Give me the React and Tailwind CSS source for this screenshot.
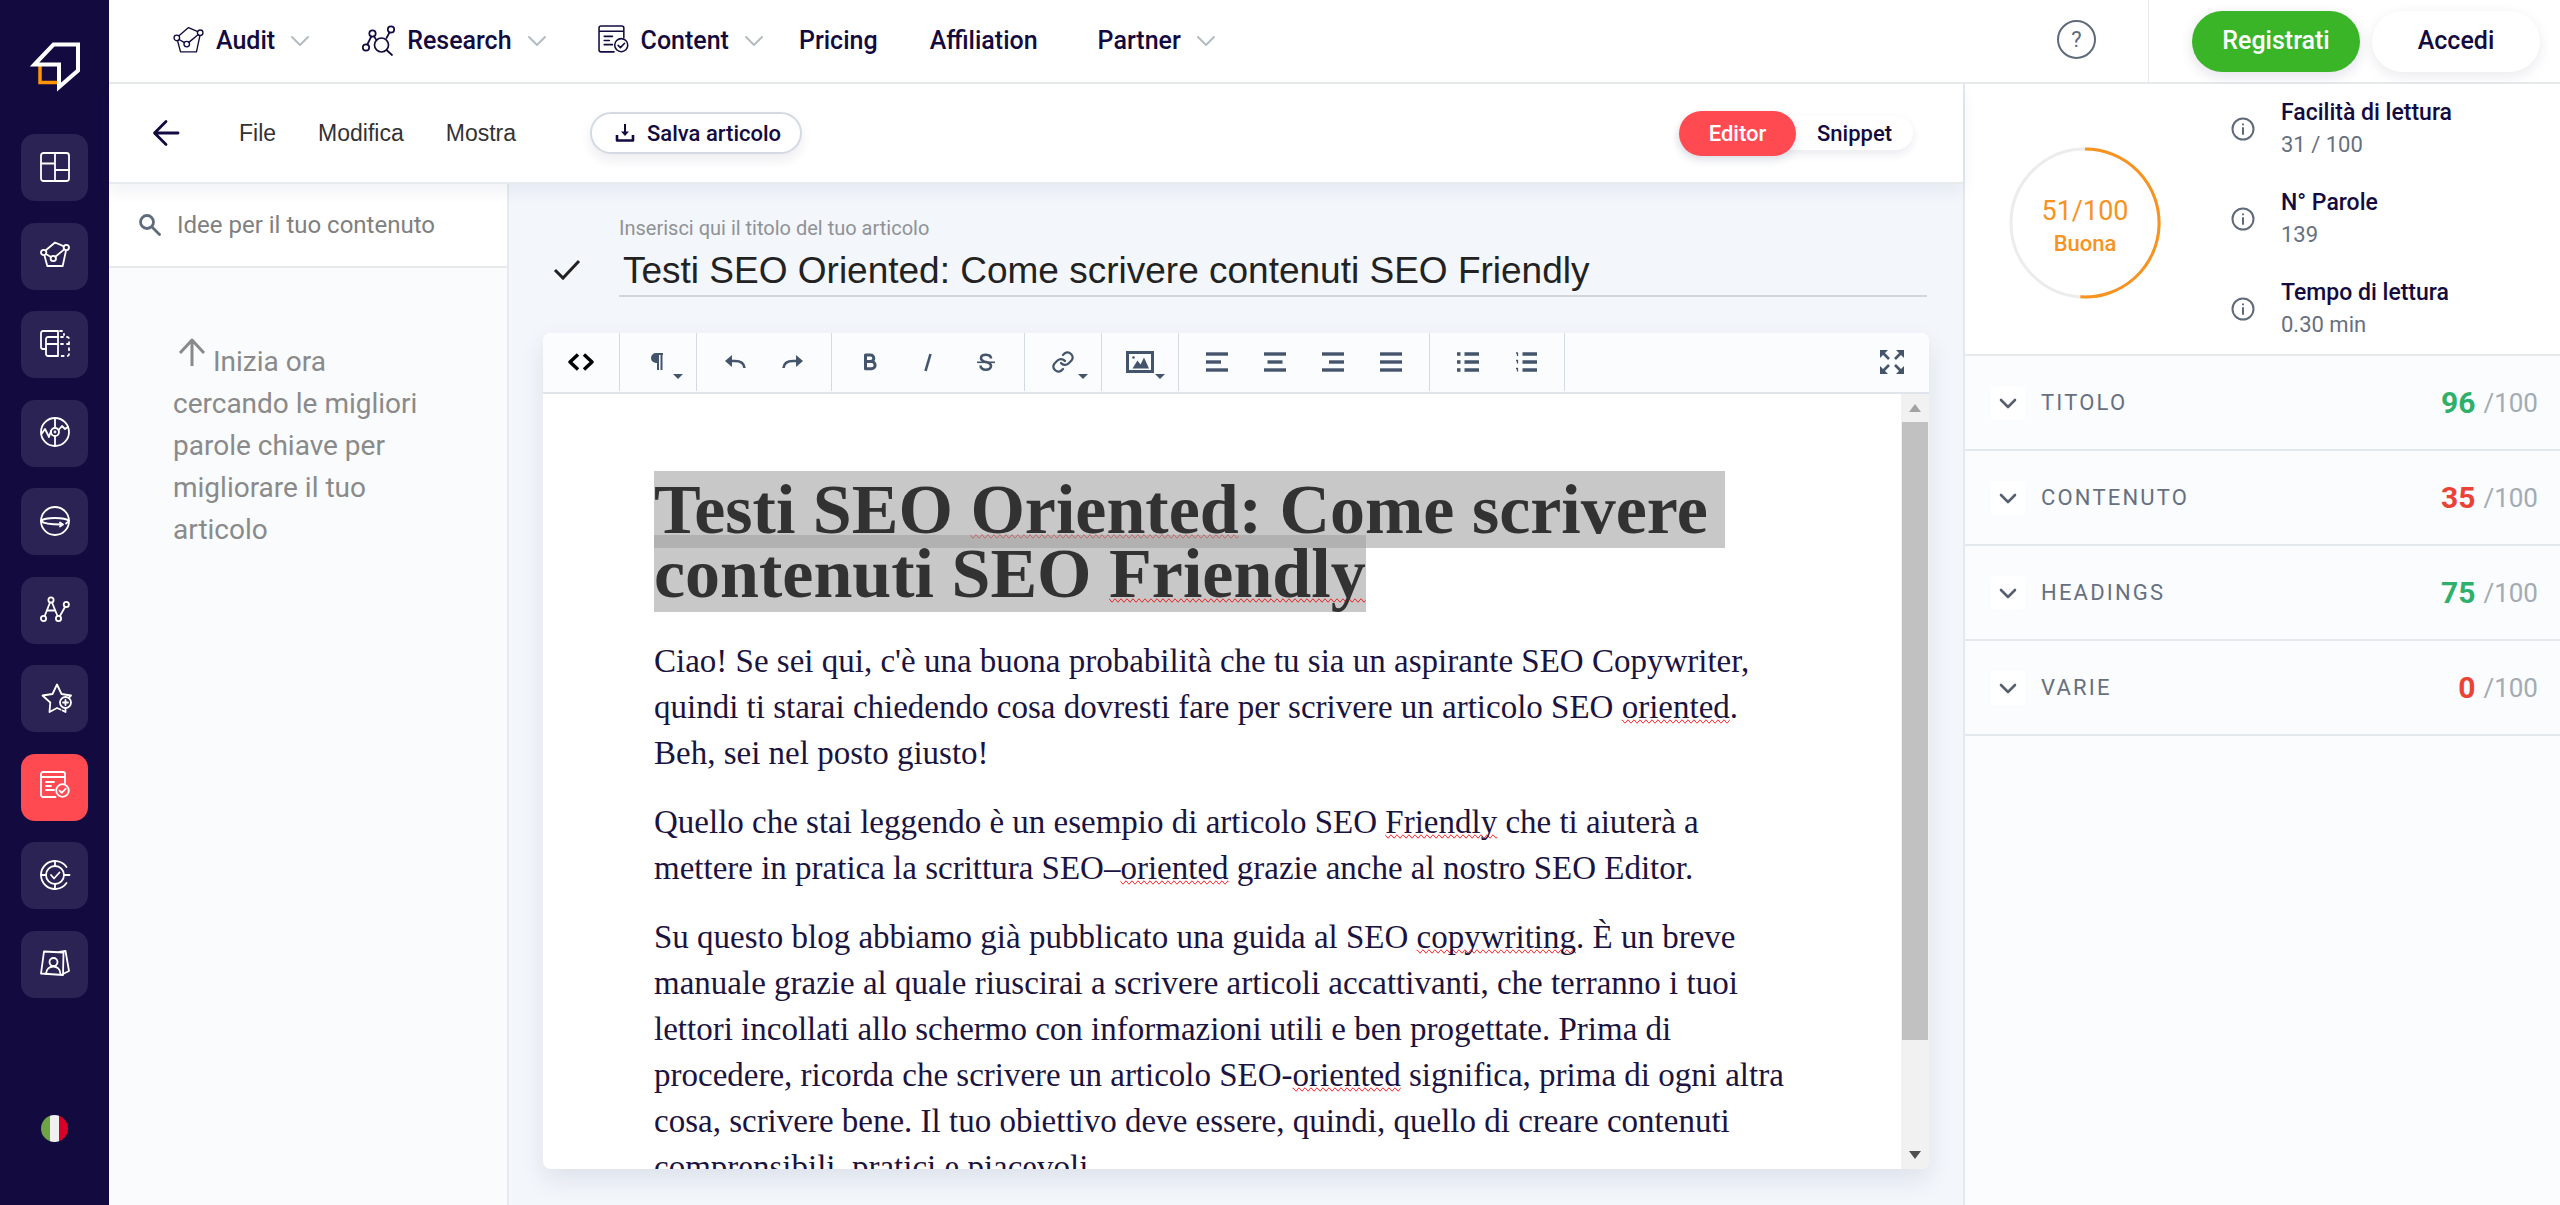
import { useState } from "react";
import clsx from "clsx";

const Icon = ({ size = 30, box = 30, width = 2, className, children }) => (
  <svg
    width={size}
    height={size}
    viewBox={`0 0 ${box} ${box}`}
    fill="none"
    stroke="currentColor"
    strokeWidth={width}
    strokeLinecap="round"
    strokeLinejoin="round"
    className={clsx("shrink-0", className)}
    aria-hidden="true"
  >
    {children}
  </svg>
);

const auditShape = (
  <>
    <circle cx="3.7" cy="12.5" r="2.7" />
    <circle cx="26.3" cy="7.5" r="2.7" />
    <circle cx="13.3" cy="18.5" r="2.7" />
    <path d="M5.9 14 11 17M15.3 16.8 24.2 9.4M5.8 10.3 15 2.5l9 3.8M4.6 16 7.3 26h15.4l3.2-15" />
  </>
);

const contentShape = (
  <>
    <path d="M15.5 26H3a2 2 0 0 1-2-2V3a2 2 0 0 1 2-2h20a2 2 0 0 1 2 2v9M1 6h24M6 11h8M6 15h5M6 19h8" />
    <circle cx="22.5" cy="19.5" r="6.3" />
    <path d="m19.5 19.7 2.2 2.2 4-4.2" />
  </>
);

const sidebarItems = [
  {
    id: "Dashboard",
    shape: (
      <>
        <rect x="1" y="1" width="28" height="28" rx="2.5" />
        <path d="M15 1v28M1 11.5h14M15 18h14" />
      </>
    ),
  },
  { id: "Audit", shape: auditShape },
  {
    id: "Confronto",
    shape: (
      <>
        <path d="M18 8V2H3a2 2 0 0 0-2 2v14a2 2 0 0 0 2 2h3" />
        <path d="M18 8v19H8a2 2 0 0 1-2-2V10a2 2 0 0 1 2-2zM6 15h12" />
        <path
          d="M20 2h2.500q1.500 0 1.500 2v2M21 8h6q2 0 2 2v15q0 2-2 2h-6M21 15h8"
          strokeDasharray="2 4"
        />
      </>
    ),
  },
  {
    id: "Monitoraggio",
    shape: (
      <>
        <circle cx="15" cy="15" r="14" />
        <circle cx="15" cy="15" r="4" />
        <circle cx="15" cy="15" r=".5" />
        <path d="M15 1v10M15 19v10M1.500 17 5 12l4 8 2-6M18.500 13 22 9l3 3 3-2" />
      </>
    ),
  },
  {
    id: "Domini",
    shape: (
      <>
        <circle cx="15" cy="15" r="14" />
        <path d="M1 15c4-4 24-4 28 0M1 15c3 3 11 3.500 20 3.500M20 16.500l3 2-3 2M26 17.500l2-1.500" />
      </>
    ),
  },
  {
    id: "Parole chiave",
    shape: (
      <>
        <circle cx="3.500" cy="24.500" r="2.600" />
        <circle cx="11" cy="6" r="2.600" />
        <circle cx="18.500" cy="24.500" r="2.600" />
        <circle cx="26.300" cy="10.500" r="2.600" />
        <path d="m4.700 22 5.300-13.500M12 8.500l5.500 13.500M19.800 22.200l5.300-9.500M7.500 16.500h7.500" />
      </>
    ),
  },
  {
    id: "Preferiti",
    shape: (
      <>
        <path d="M20.500 26.500 17 25l-7.500 4 .8-9.500L2.500 12.500l10-1.500L17 1.500l4.500 9.500 9.500 1.500-1.500 1.500M25.500 26v3l-3-1.500" />
        <circle cx="25.500" cy="19.500" r="5.500" />
        <path d="M25.500 17v5M23 19.500h5" />
      </>
    ),
  },
  { id: "Content", shape: contentShape, active: true },
  {
    id: "Obiettivi",
    shape: (
      <>
        <path d="M26.500 7A14 14 0 1 0 26.500 23" />
        <circle cx="15" cy="15" r="9" />
        <path d="M15 1v5M15 24v5M1 15h5M24 15h5.500M11 15l3 3.500 5.500-6" />
      </>
    ),
  },
  {
    id: "Profili",
    shape: (
      <>
        <path d="M4 3.500 23.500 4.500 23 27 1 25.500zM19.500 4l6-1 3.500 20-5 2.500" />
        <circle cx="13.500" cy="14" r="4" />
        <path d="M6 26c0-10 14.500-10 14.500 0" />
      </>
    ),
  },
];

const Chevron = () => (
  <Icon size={18} box={18} width={2} className="text-[#b3bcc3]">
    <path d="m1 5 8 8 8-8" />
  </Icon>
);

const navItems = [
  {
    label: "Audit",
    menu: true,
    icon: (
      <Icon size={31} box={30} width={1.3}>
        {auditShape}
      </Icon>
    ),
    margin: "ml-0",
  },
  {
    label: "Research",
    menu: true,
    icon: (
      <Icon size={34} box={34} width={1.7}>
        <circle cx="5" cy="23.500" r="3.200" />
        <circle cx="11.500" cy="9.500" r="3.200" />
        <circle cx="30" cy="5.500" r="3.200" />
        <circle cx="20.500" cy="21" r="7" />
        <path d="m6.300 20.500 4-8M13 12.500l2.500 3.500M28.500 8.500l-3 5.500M25.500 26l5.500 5" />
      </Icon>
    ),
    margin: "ml-[52px]",
  },
  {
    label: "Content",
    menu: true,
    icon: (
      <Icon size={31} box={30} width={1.5}>
        {contentShape}
      </Icon>
    ),
    margin: "ml-[52px]",
  },
  { label: "Pricing", margin: "ml-9" },
  { label: "Affiliation", margin: "ml-[52px]" },
  { label: "Partner", menu: true, margin: "ml-[60px]" },
];

const stats = [
  { label: "Facilità di lettura", value: "31 / 100" },
  { label: "N° Parole", value: "139" },
  { label: "Tempo di lettura", value: "0.30 min" },
];

const sections = [
  { label: "TITOLO", score: 96, color: "text-[#2fb06a]" },
  { label: "CONTENUTO", score: 35, color: "text-[#ea4335]" },
  { label: "HEADINGS", score: 75, color: "text-[#2fb06a]" },
  { label: "VARIE", score: 0, color: "text-[#ea4335]" },
];

const lines = (rows) => (
  <Icon size={24} box={24} width={3.4} className="[stroke-linecap:butt]">
    {rows.map(([from, to], i) => (
      <path key={i} d={`M${from} ${4 + i * (16 / (rows.length - 1))}H${to}`} />
    ))}
  </Icon>
);

const toolbarGroups = [
  [
    {
      id: "Codice",
      dark: true,
      icon: (
        <Icon size={26} box={26} width={3.4} className="[stroke-linecap:butt]">
          <path d="m10 5.500-8 7.500 8 7.500M16 5.500l8 7.500-8 7.500" />
        </Icon>
      ),
    },
  ],
  [
    {
      id: "Paragrafo",
      menu: true,
      icon: (
        <Icon size={24} box={24} width={2}>
          <path d="M12 4H10a4 4 0 0 0 0 8h2z" fill="currentColor" />
          <path d="M12 4v16M15.500 4v16M12 4h5" strokeLinecap="butt" />
        </Icon>
      ),
    },
  ],
  [
    {
      id: "Annulla",
      icon: (
        <Icon size={24} box={24} width={2.6} className="[stroke-linecap:butt]">
          <path d="M7 11h5c5 0 9 1.500 9.500 7" />
          <path d="m9 5-7 6 7 6z" fill="currentColor" stroke="none" />
        </Icon>
      ),
    },
    {
      id: "Ripeti",
      icon: (
        <Icon size={24} box={24} width={2.6} className="[stroke-linecap:butt]">
          <path d="M17 11h-5c-5 0-9 1.500-9.500 7" />
          <path d="m15 5 7 6-7 6z" fill="currentColor" stroke="none" />
        </Icon>
      ),
    },
  ],
  [
    {
      id: "Grassetto",
      icon: (
        <Icon size={24} box={24} width={3}>
          <path d="M7.500 5h5a3.300 3.300 0 0 1 0 6.600h-5zM7.500 11.600h6a3.600 3.600 0 0 1 0 7.200h-6z" />
        </Icon>
      ),
    },
    {
      id: "Corsivo",
      icon: (
        <Icon size={24} box={24} width={2.6} className="[stroke-linecap:butt]">
          <path d="m14.500 4-5 17" />
        </Icon>
      ),
    },
    {
      id: "Barrato",
      icon: (
        <Icon size={24} box={24} width={2.6} className="[stroke-linecap:butt]">
          <path d="M17 8.500c0-5-10-5-10-.5 0 3 3 3.500 5 4s5 1.200 5 4c0 5-10.500 5-10.500-.5" />
          <path d="M3 12.300h18" strokeWidth="1.600" />
        </Icon>
      ),
    },
  ],
  [
    {
      id: "Link",
      menu: true,
      icon: (
        <Icon size={24} box={24} width={2.2}>
          <path d="M10 13a5 5 0 0 0 7.500.5l3-3a5 5 0 0 0-7-7L12 5" />
          <path d="M14 11a5 5 0 0 0-7.500-.5l-3 3a5 5 0 0 0 7 7L12 19" />
        </Icon>
      ),
    },
  ],
  [
    {
      id: "Immagine",
      menu: true,
      icon: (
        <Icon size={28} box={28} width={3} className="[stroke-linejoin:miter]">
          <rect x="1.500" y="4.500" width="25" height="19" />
          <circle cx="7.500" cy="9.500" r="1.300" fill="currentColor" stroke="none" />
          <path d="m6.500 20.500 5-8 3 4 3.500-7 5 11z" fill="currentColor" stroke="none" />
        </Icon>
      ),
    },
  ],
  [
    { id: "Sinistra", icon: lines([[1, 23], [1, 16], [1, 23]]) },
    { id: "Centro", icon: lines([[1, 23], [4.5, 19.5], [1, 23]]) },
    { id: "Destra", icon: lines([[1, 23], [8, 23], [1, 23]]) },
    { id: "Giustificato", icon: lines([[1, 23], [1, 23], [1, 23]]) },
  ],
  [
    {
      id: "Elenco puntato",
      icon: (
        <Icon size={24} box={24} width={3.4} className="[stroke-linecap:butt]">
          <path d="M8.500 4H23M8.500 12H23M8.500 20H23M1 4h3.500M1 12h3.500M1 20h3.500" />
        </Icon>
      ),
    },
    {
      id: "Elenco numerato",
      icon: (
        <Icon size={24} box={24} width={3.4} className="[stroke-linecap:butt]">
          <path d="M8.500 4H23M8.500 12H23M8.500 20H23" />
          <path d="M2 3h1.500v3M2 10.500h1.500v3M2 18.500h1.500v3" strokeWidth="1.300" />
        </Icon>
      ),
    },
  ],
];

const Typo = ({ children }) => (
  <span className="decoration-[#e02020] [text-decoration-line:spelling-error]">
    {children}
  </span>
);

function Sidebar() {
  return (
    <aside className="flex w-[109px] shrink-0 flex-col items-center bg-[#130b40]">
      <a href="#" aria-label="Home" className="mt-10 block">
        <svg width="52" height="54" viewBox="0 0 52 54" fill="none">
          <path d="M11 25v17.500h18" stroke="#ff9500" strokeWidth="3.500" />
          <path
            d="M5.500 24.500 24.500 4.500H49V30.500L30 47V24.500Z"
            stroke="#fff"
            strokeWidth="4"
          />
        </svg>
      </a>
      <nav className="mt-10 flex h-[864px] flex-col justify-between">
        {sidebarItems.map(({ id, shape, active }) => (
          <button
            key={id}
            aria-label={id}
            className={clsx(
              "flex size-[67px] items-center justify-center rounded-[14px] pb-0.5 text-white",
              active ? "bg-[#ff4a52]" : "bg-[#2a2353]"
            )}
          >
            <Icon width={1.8} className="overflow-visible">
              {shape}
            </Icon>
          </button>
        ))}
      </nav>
      <button aria-label="Italiano" className="mt-[117px]">
        <span className="flex size-[27px] overflow-hidden rounded-full">
          <span className="flex-1 bg-[#6da544]" />
          <span className="flex-1 bg-[#f0f0f0]" />
          <span className="flex-1 bg-[#d80027]" />
        </span>
      </button>
    </aside>
  );
}

function TopNav() {
  return (
    <header className="flex h-[84px] shrink-0 items-stretch border-b-2 border-[#e6eaec] bg-white">
      <nav className="flex flex-1 items-center pb-px pl-16 text-[25px] font-medium">
        {navItems.map(({ label, menu, icon, margin }) => (
          <a
            key={label}
            href="#"
            className={clsx("flex items-center whitespace-nowrap", margin)}
          >
            {icon}
            <span className={clsx(icon && "ml-3")}>{label}</span>
            {menu && (
              <span className="ml-4">
                <Chevron />
              </span>
            )}
          </a>
        ))}
      </nav>
      <button
        aria-label="Aiuto"
        className="mr-[52px] mb-1 flex size-[39px] items-center justify-center self-center rounded-full border-2 border-[#5f6a7a] text-[22px] text-[#5f6a7a]"
      >
        ?
      </button>
      <div className="flex items-center gap-3 border-l border-[#e9ecef] pr-5 pl-[43px] text-[25px] font-medium">
        <button className="h-[61px] w-[168px] rounded-full bg-[#3ab528] text-white shadow-[0_4px_14px_rgba(20,20,80,0.12)]">
          Registrati
        </button>
        <button className="h-[61px] w-[168px] rounded-full bg-white shadow-[0_4px_14px_rgba(20,20,80,0.09)]">
          Accedi
        </button>
      </div>
    </header>
  );
}

function SubHeader({ tab, onTab }) {
  return (
    <div className="relative z-10 flex h-[100px] shrink-0 items-center border-b-2 border-[#e6eaec] bg-white pr-[50px] pl-[43px] shadow-[0_8px_16px_rgba(20,30,80,0.06)]">
      <button aria-label="Indietro">
        <Icon size={28} box={28} width={2.8}>
          <path d="M26 14H3M14 2.500 2.500 14 14 25.500" />
        </Icon>
      </button>
      <div className="ml-[59px] flex gap-[42px] font-['Liberation_Sans',sans-serif] text-[23px] text-[#333]">
        <button>File</button>
        <button>Modifica</button>
        <button>Mostra</button>
      </div>
      <button className="ml-[74px] flex h-[42px] items-center gap-3 rounded-full border-2 border-[#d3dae3] bg-white pr-[19px] pl-[23px] text-[22px] font-medium whitespace-nowrap shadow-[0_6px_12px_rgba(20,30,80,0.08)]">
        <Icon size={20} box={20} width={2.6} className="[stroke-linecap:butt]">
          <path d="M2 12v5.500h16V12" />
          <path d="M10 1v10" strokeWidth="2" />
          <path d="M6 8.500h8l-4 4.500z" fill="currentColor" stroke="none" />
        </Icon>
        Salva articolo
      </button>
      <div className="ml-auto flex h-[34px] items-center rounded-full bg-white text-[22px] font-medium shadow-[0_4px_10px_rgba(20,30,80,0.09)]">
        {["Editor", "Snippet"].map((name) => (
          <button
            key={name}
            onClick={() => onTab(name)}
            className={clsx(
              "h-[45px] w-[117px] rounded-full",
              tab === name &&
                "bg-[#ff4a52] text-white shadow-[0_4px_10px_rgba(20,30,80,0.12)]"
            )}
          >
            {name}
          </button>
        ))}
      </div>
    </div>
  );
}

function Ideas() {
  return (
    <section className="flex w-[400px] shrink-0 flex-col border-r-2 border-[#e6eaf0] bg-[#f9fbfd]">
      <label className="flex h-[84px] items-center gap-4 border-b-2 border-[#e6eaec] bg-white pl-[30px] text-[#5f6b7a]">
        <Icon size={22} box={22} width={2.8}>
          <circle cx="8" cy="8" r="6.500" />
          <path d="m13 13 7.500 7.500" />
        </Icon>
        <input
          type="text"
          aria-label="Idee per il tuo contenuto"
          placeholder="Idee per il tuo contenuto"
          className="w-[300px] text-2xl outline-none placeholder:text-[#808080]"
        />
      </label>
      <p className="mt-[70px] w-[340px] pr-6 pl-16 text-[28px] leading-[42px] text-[#8a8a8a]">
        <Icon
          size={28}
          box={28}
          width={3}
          className="ml-[5px] inline-block align-[5px] [stroke-linecap:butt]"
        >
          <path d="M14 28V2M2 15 14 2l12 13" />
        </Icon>{" "}
        Inizia ora cercando le migliori parole chiave per migliorare il tuo
        articolo
      </p>
    </section>
  );
}

function Toolbar() {
  return (
    <div className="flex h-[61px] shrink-0 items-start rounded-t-lg border-b-2 border-[#dfe5ea] bg-[#fafcfe] text-[#44546b]">
      {toolbarGroups.map((group, i) => (
        <div key={i} className="flex h-[58px] border-r border-[#d3dae1] px-[9px]">
          {group.map(({ id, icon, menu, dark }) => (
            <button
              key={id}
              aria-label={id}
              className={clsx(
                "relative flex w-[58px] items-center justify-center",
                dark && "text-black"
              )}
            >
              {icon}
              {menu && (
                <span className="absolute right-1 bottom-3 border-x-5 border-t-5 border-x-transparent border-t-[#44546b]" />
              )}
            </button>
          ))}
        </div>
      ))}
      <button aria-label="Schermo intero" className="mt-[17px] mr-[25px] ml-auto">
        <Icon size={24} box={24} width={2.6} className="[stroke-linecap:butt]">
          <path d="m3 3 6 6M21 3l-6 6M3 21l6-6M21 21l-6-6" />
          <path
            d="M0 0h8L0 8zM24 0h-8l8 8zM0 24h8l-8-8zM24 24h-8l8-8z"
            fill="currentColor"
            stroke="none"
          />
        </Icon>
      </button>
    </div>
  );
}

function Article() {
  return (
    <article className="flex-1 overflow-hidden px-[111px] pt-[84px] font-['Liberation_Serif',serif] text-[33px] leading-[46px] text-[#1b1440]">
      <h1 className="mb-8 text-[70px] leading-[64px] font-bold text-[#323232]">
        <span className="bg-[#a0a0a0]/58">
          Testi SEO <Typo>Oriented</Typo>: Come scrivere&nbsp;
          <br />
          contenuti SEO <Typo>Friendly</Typo>
        </span>
      </h1>
      <p className="mb-[23px]">
        Ciao! Se sei qui, c'è una buona probabilità che tu sia un aspirante SEO
        Copywriter, quindi ti starai chiedendo cosa dovresti fare per scrivere
        un articolo SEO <Typo>oriented</Typo>. Beh, sei nel posto giusto!
      </p>
      <p className="mb-[23px]">
        Quello che stai leggendo è un esempio di articolo SEO{" "}
        <Typo>Friendly</Typo> che ti aiuterà a mettere in pratica la scrittura
        SEO–<Typo>oriented</Typo> grazie anche al nostro SEO Editor.
      </p>
      <p>
        Su questo blog abbiamo già pubblicato una guida al SEO{" "}
        <Typo>copywriting</Typo>. È un breve manuale grazie al quale riuscirai a
        scrivere articoli accattivanti, che terranno i tuoi lettori incollati
        allo schermo con informazioni utili e ben progettate. Prima di
        procedere, ricorda che scrivere un articolo SEO-<Typo>oriented</Typo>{" "}
        significa, prima di ogni altra cosa, scrivere bene. Il tuo obiettivo
        deve essere, quindi, quello di creare contenuti comprensibili, pratici e
        piacevoli.
      </p>
    </article>
  );
}

function Scrollbar() {
  return (
    <div className="flex w-7 shrink-0 flex-col items-center bg-[#f1f1f1]">
      <span className="flex h-7 shrink-0 items-center">
        <span className="border-x-6 border-b-8 border-x-transparent border-b-[#a3a3a3]" />
      </span>
      <div className="w-full flex-1 px-px">
        <div className="h-[86%] bg-[#c1c1c1]" />
      </div>
      <span className="flex h-7 shrink-0 items-center">
        <span className="border-x-6 border-t-8 border-x-transparent border-t-[#505050]" />
      </span>
    </div>
  );
}

function Editor() {
  const [title, setTitle] = useState(
    "Testi SEO Oriented: Come scrivere contenuti SEO Friendly"
  );

  return (
    <main className="flex min-w-0 flex-1 flex-col bg-[#f3f6fb] px-[34px] pt-7 pb-9">
      <div className="flex items-end pl-2">
        <Icon size={32} box={32} width={3} className="mb-3 text-[#222]">
          <path d="m4 17 8 8L28 8" strokeLinecap="butt" strokeLinejoin="miter" />
        </Icon>
        <div className="mr-0.5 ml-9 flex flex-1 flex-col border-b-2 border-[#d3d7dc]">
          <label htmlFor="title" className="text-xl leading-8 text-[#8f9296]">
            Inserisci qui il titolo del tuo articolo
          </label>
          <input
            id="title"
            value={title}
            onChange={(e) => setTitle(e.target.value)}
            className="h-[51px] pt-0.5 pl-1 font-['Liberation_Sans',sans-serif] text-[37px] text-[#222] outline-none"
          />
        </div>
      </div>
      <div className="mt-9 flex min-h-0 flex-1 flex-col rounded-lg bg-white shadow-[0_10px_24px_rgba(30,50,90,0.10)]">
        <Toolbar />
        <div className="flex min-h-0 flex-1 overflow-hidden rounded-b-lg">
          <Article />
          <Scrollbar />
        </div>
      </div>
    </main>
  );
}

function ScorePanel() {
  return (
    <aside className="flex w-[597px] shrink-0 flex-col border-l-2 border-[#e3e9f0] bg-[#fafcfe]">
      <div className="flex h-[272px] items-center border-b-2 border-[#e6eaec] bg-white pl-11">
        <div className="relative mt-[7px] flex size-[152px] flex-col items-center justify-center pt-2 text-[#f7931e]">
          <svg
            viewBox="0 0 152 152"
            fill="none"
            strokeWidth="3"
            className="absolute inset-0"
          >
            <circle cx="76" cy="76" r="74" stroke="#ececec" />
            <path d="M76 2a74 74 0 1 1-4.600 147.850" stroke="#f7931e" />
          </svg>
          <span className="text-[27px] leading-[34px]">51/100</span>
          <span className="text-[22px] leading-8 font-medium">Buona</span>
        </div>
        <ul className="ml-[70px] flex flex-col gap-[26px]">
          {stats.map(({ label, value }) => (
            <li key={label} className="flex items-center gap-[26px]">
              <Icon size={24} box={24} width={2} className="text-[#5f6a7a]">
                <circle cx="12" cy="12" r="10.500" />
                <path d="M12 11v6M12 7.300v.2" />
              </Icon>
              <div>
                <p className="text-[23px] leading-8 font-medium">{label}</p>
                <p className="text-[22px] leading-8 text-[#667080]">{value}</p>
              </div>
            </li>
          ))}
        </ul>
      </div>
      {sections.map(({ label, score, color }) => (
        <button
          key={label}
          className="flex h-[95px] items-center border-b-2 border-[#e3e8ed] pr-[22px] pl-[26px]"
        >
          <span className="flex size-[34px] items-center justify-center rounded bg-white text-[#56606e]">
            <Icon size={18} box={18} width={2.6}>
              <path d="m2 6 7 7 7-7" />
            </Icon>
          </span>
          <span className="ml-4 text-[22px] tracking-widest text-[#667080]">
            {label}
          </span>
          <span className={clsx("ml-auto text-[30px] leading-9 font-bold", color)}>
            {score}
          </span>
          <span className="ml-2 text-[26px] leading-9 text-[#a3abb3]">
            /100
          </span>
        </button>
      ))}
    </aside>
  );
}

function App() {
  const [tab, setTab] = useState("Editor");

  return (
    <div className="flex h-screen overflow-hidden bg-white font-[Roboto,sans-serif] text-[#130b40]">
      <Sidebar />
      <div className="flex min-w-0 flex-1 flex-col">
        <TopNav />
        <div className="flex min-h-0 flex-1">
          <div className="flex min-w-0 flex-1 flex-col">
            <SubHeader tab={tab} onTab={setTab} />
            <div className="flex min-h-0 flex-1">
              <Ideas />
              <Editor />
            </div>
          </div>
          <ScorePanel />
        </div>
      </div>
    </div>
  );
}

export default App;
